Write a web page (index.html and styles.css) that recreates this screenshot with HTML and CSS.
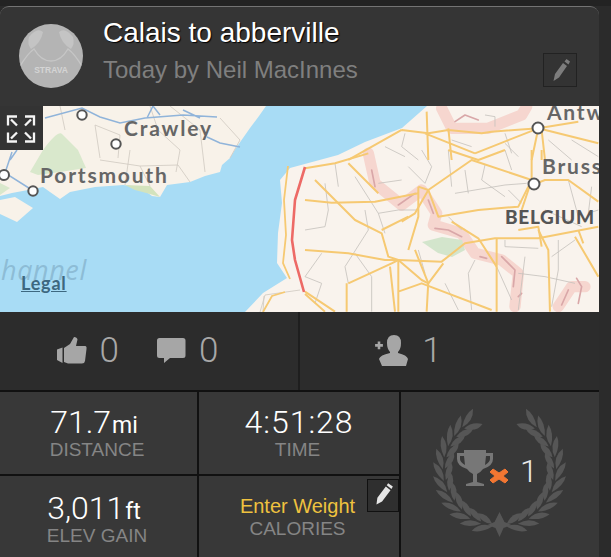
FILE: index.html
```html
<!DOCTYPE html>
<html lang="en">
<head>
<meta charset="utf-8">
<title>Calais to abberville</title>
<link rel="stylesheet" href="styles.css">
</head>
<body>
<main class="card">
  <header class="head">
    <svg class="avatar" viewBox="0 0 64 64" aria-hidden="true">
      <defs><clipPath id="av"><circle cx="32" cy="32" r="32"/></clipPath></defs>
      <circle cx="32" cy="32" r="32" fill="#b4b4b4"/>
      <g clip-path="url(#av)">
        <path d="M0 44 Q8 30 15 25 Q22 37 32 37 Q42 37 49 25 Q56 30 64 44" fill="none" stroke="#c6c6c6" stroke-width="1.4"/>
        <path d="M10 13 Q18 3 24 8 Q22 19 12 25 Q8 20 10 13Z" fill="#c4c4c4"/>
        <path d="M54 13 Q46 3 40 8 Q42 19 52 25 Q56 20 54 13Z" fill="#c4c4c4"/>
      </g>
      <text x="32" y="49" class="avatar-text" text-anchor="middle">STRAVA</text>
    </svg>
    <div class="titles">
      <h1 class="title">Calais to abberville</h1>
      <p class="sub">Today by Neil MacInnes</p>
    </div>
    <button class="edit" aria-label="Edit">
      <svg viewBox="0 0 32 32" width="32" height="32"><path d="M9.500 27 L11 20 L19 9 L23 12 L15 23.500Z M20.500 7.500 L22.500 5 L26 7.500 L24.500 10.500Z" fill="#7d7d7d"/></svg>
    </button>
  </header>

  <section class="map">
    <svg class="map-art" viewBox="0 106 599 206" width="599" height="206" aria-hidden="true">
      <rect x="0" y="106" width="599" height="206" fill="#a8dcf5"/>
      <!-- England -->
      <path d="M0 106 H266 L259 116 L250 128 L236 148 L230 158 L222 165 L220 172 L205 176 L190 182 L167 185 L160 197 L152 196 L140 187 L123 185 L95 187 L70 192 L60 199 L50 192 L43 187 L28 190 L12 193 L0 196Z" fill="#f8f2e9"/>
      <path d="M0 200 L15 197 L33 208 L17 222 L0 214Z" fill="#f8f2e9"/>
      <path d="M43 150 Q58 130 62 134 L78 150 L86 168 L60 172 L38 175 L30 172Z" fill="#d9e8cc"/>
      <path d="M125 185 L150 186 L160 197 L150 194 L135 190Z" fill="#d3e3bd"/>
      <path d="M0 183 L10 188 L0 195Z" fill="#d9e8cc"/>
      <!-- France / Belgium -->
      <path d="M427 106 H599 V312 H245 L263 293 L287 278 L277 263 L278 233 L282 203 L280 180 L290 168 L338 155 L365 142 L402 128Z" fill="#f9f3ed"/>
      <!-- thin borders -->
      <g fill="none" stroke="#cfc9c0" stroke-width=".8">
        <path d="M100 158 L95 125 L120 135 L118 158 M150 106 L158 130 L180 150 L176 172 M220 118 L240 140 L230 158 M100 160 L140 166 L178 165 L190 182 M140 166 L150 186 M260 312 L265 295 L300 290 M264 296 L263 312 M60 106 L65 130 M170 106 L200 130 L205 172 M130 150 L125 185"/>
      </g>
      <!-- pink hills -->
      <g transform="translate(305 150) scale(.3333)" fill="none" stroke-linejoin="round" stroke-linecap="round">
        <path d="M190 10 L210 100 L290 165 L350 120 L395 190 L385 225 L470 250 L510 310 L590 330 L640 370 L630 470 M760 470 L800 410 L840 410" stroke="#f6d6cf" stroke-width="34"/>
        <path d="M200 60 L210 110 M280 165 L330 130 M370 150 L385 190 M390 235 L430 240 L470 260 M525 320 L545 325 M590 320 L630 360 L625 410 M640 440 L650 430 M770 465 L790 420 M815 385 L830 410 L820 460" stroke="#d9a7a8" stroke-width="5"/>
      </g>
      <g transform="translate(305 0) scale(.3333)" fill="none" stroke-linejoin="round" stroke-linecap="round">
        <path d="M410 325 L440 385 L550 385 L650 345 L665 320" stroke="#f6d6cf" stroke-width="34"/>
        <path d="M450 365 L480 345 L520 360" stroke="#d9a7a8" stroke-width="5"/>
      </g>
      <path d="M422 242 L442 237 L462 240 L465 250 L452 257 L438 253Z" fill="#d3e5cc"/>
      <!-- thin lines France -->
      <g transform="translate(305 150) scale(.3333)" fill="none" stroke="#c4c0bb" stroke-width="2.400">
        <path d="M0 240 L60 230 L70 180 L60 100 M90 40 L100 110 M180 180 L190 240 L120 350 L130 400 M0 380 L50 310 M220 100 L290 90 M310 50 L360 100 L380 50 L350 0 M450 130 L600 105 L665 100 M480 60 L490 130 M540 45 L530 90 L600 140 M610 120 L650 160 M510 330 L490 370 L500 480 M620 450 L575 350 M640 370 L720 380 L810 400 M740 320 L810 270 M860 110 L850 190 L880 180 M790 90 L820 200 M220 190 L280 180 L340 180 M600 270 L600 290 L700 295 M720 180 L830 230 M430 200 L470 240 M30 460 L50 400 L0 380 M150 80 L220 190 L240 250 M340 300 L360 370 M660 320 L640 480 M420 400 L460 480 M150 310 L200 380 L200 485 M440 110 L430 0 M600 0 L620 60 M760 270 L760 360 L740 470"/>
      </g>
      <g transform="translate(305 0) scale(.3333)" fill="none" stroke="#c4c0bb" stroke-width="2.400">
        <path d="M300 400 L290 440 L340 480 M540 345 L570 350 L570 380 M600 430 L640 470 M730 420 L800 480 M800 420 L880 470 M240 440 L300 470 M440 420 L500 440 M600 400 L620 460"/>
      </g>
      <!-- orange roads -->
      <g transform="translate(305 150) scale(.3333)" fill="none" stroke="#f6c972" stroke-width="6" stroke-linejoin="round">
        <path d="M0 150 L80 158 L210 155 L340 130"/>
        <path d="M30 90 L90 150 L150 210 L230 250 L250 320 L280 330"/>
        <path d="M130 40 L220 130 M0 55 L90 40 L190 10"/>
        <path d="M340 110 L370 120 L400 200 L520 180 L640 170 L670 110 L720 90 L790 90 L880 155"/>
        <path d="M290 215 L330 190 L370 120 L500 30 L680 90"/>
        <path d="M0 300 L130 310 L240 330 L280 330 L410 335 L480 280 L570 265 L700 265 L880 230"/>
        <path d="M130 400 L260 340 L280 330 L350 390 L370 400 L415 340"/>
        <path d="M280 330 L280 485 M255 350 L270 485 M280 425 L350 400 L560 480 M125 485 L125 400"/>
        <path d="M575 265 L575 485 M700 240 L730 300 L735 485 M370 395 L365 485 M330 300 L370 400"/>
        <path d="M0 425 L90 485 M0 432 L60 485 M810 260 L880 380 M440 215 L520 265 L575 350"/>
        <path d="M680 0 L680 90 L650 180 M710 0 L710 30 M430 0 L520 30 L600 0 M340 110 L340 200 L310 300 M640 240 L700 230 L710 290 M230 240 L310 200 M820 240 L835 280"/>
      </g>
      <g transform="translate(305 0) scale(.3333)" fill="none" stroke="#f6c972" stroke-width="6" stroke-linejoin="round">
        <path d="M365 335 L370 480 M290 390 L370 400 L430 390 L530 400 L560 395 L700 385 L880 430 M430 385 L440 480 M360 400 L510 460 M700 385 L680 480 M700 385 L820 365 M510 460 L700 385 M130 480 L290 390 M710 390 L720 480"/>
      </g>
      <!-- coast road France -->
      <path d="M288 166 L284 200 L286 235 L283 263 L290 279 M263 312 L272 296 L285 292" fill="none" stroke="#f6c972" stroke-width="1.800"/>
      <!-- route -->
      <path d="M305 167 L295 200 L292 240 L295 260 L304 292" fill="none" stroke="#ed6a66" stroke-width="2.600" stroke-linejoin="round"/>
      <!-- England roads -->
      <g fill="none" stroke="#90b4da" stroke-width="1.500">
        <path d="M45 118 L82 108 L100 117 L120 123 L145 118 L183 115 L217 117 M147 118 L153 106 L160 115 M183 110 L200 118"/>
        <path d="M207 137 L220 143 L240 147 M10 160 L17 150 M12 152 L5 173 L32 190"/>
      </g>
      <g fill="#fff" stroke="#555" stroke-width="2">
        <circle cx="82" cy="115" r="4.700"/><circle cx="116" cy="144" r="4.700"/>
        <circle cx="4" cy="175" r="5"/><circle cx="33" cy="191" r="4.700"/>
        <circle cx="538" cy="128" r="5.500"/><circle cx="534" cy="184" r="5.500"/>
      </g>
      <text x="124" y="136" class="place">Crawley</text>
      <text x="40" y="183" class="place">Portsmouth</text>
      <text x="547" y="120" class="place">Antw</text>
      <text x="542" y="174" class="place">Brussels</text>
      <text x="505" y="224" class="country">BELGIUM</text>
      <text x="1" y="280" class="sea">hannel</text>
    </svg>
    <button class="expand" aria-label="Expand">
      <svg viewBox="0 0 43 44" width="43" height="44"><path d="M9 27v9h9M12 33l6-6M35 27v9h-9M32 33l-6-6M9 20v-9h9M12 14l6 6M35 20v-9h-9M32 14l-6 6" transform="translate(-1 -.5)" fill="none" stroke="#f4f4f4" stroke-width="2.300"/></svg>
    </button>
    <a class="legal" href="#">Legal</a>
  </section>

  <section class="social">
    <div class="social-cell social-left">
      <span class="count-group">
        <svg class="ic" width="30" height="28" viewBox="0 0 30 28"><path d="M0 12.500 L5.500 10.500 V26 L0 23Z M7 11 L13 7 L17 0 Q20 0 20.500 2.500 L19 9 H28.500 Q30 9.500 29.500 12 L28 24 Q27.500 27 24 26.500 H11 L7 25Z" fill="#a6a6a6"/></svg>
        <span class="count">0</span>
      </span>
      <span class="count-group">
        <svg class="ic" width="29" height="26" viewBox="0 0 29 26"><path d="M2.500 0 H26 Q28.500 0 28.500 2.500 V17.500 Q28.500 20 26 20 H13 L7 25 L7 20 H2.500 Q0 20 0 17.500 V2.500 Q0 0 2.500 0Z" fill="#a6a6a6"/></svg>
        <span class="count">0</span>
      </span>
    </div>
    <div class="social-cell social-right">
      <span class="count-group">
        <svg class="ic" width="34" height="32" viewBox="0 0 34 32"><path d="M2.700 6.500 h2.600 v2.600 h2.600 v2.600 h-2.600 v2.600 h-2.600 v-2.600 h-2.600 v-2.600 h2.600Z M19 0 Q26 0 26 8 Q26 14 23 17 V18 Q32 20 33 24 L31 31 H7 L4 24 Q5 20 15 18 V17 Q12 14 12 8 Q12 0 19 0Z" fill="#a6a6a6"/></svg>
        <span class="count">1</span>
      </span>
    </div>
  </section>

  <section class="stats">
    <div class="stat">
      <div class="value has-unit">71.7<small class="unit">mi</small></div>
      <div class="label">DISTANCE</div>
    </div>
    <div class="stat">
      <div class="value value-time">4:51:28</div>
      <div class="label">TIME</div>
    </div>
    <div class="stat trophy-cell">
      <svg width="198" height="165" viewBox="401 392 198 165" aria-hidden="true">
        <defs>
          <g id="leaf-pair" fill="#565656">
            <path d="M-9 -56 Q0 -66 10 -66 Q4 -55 -9 -56Z"/>
            <path d="M-8 -54 Q2 -56 10 -48 Q0 -44 -8 -54Z"/>
          </g>
          <g id="branch">
            <use href="#leaf-pair" transform="rotate(-164)"/>
            <use href="#leaf-pair" transform="rotate(-152)"/>
            <use href="#leaf-pair" transform="rotate(-140)"/>
            <use href="#leaf-pair" transform="rotate(-128)"/>
            <use href="#leaf-pair" transform="rotate(-116)"/>
            <use href="#leaf-pair" transform="rotate(-104)"/>
            <use href="#leaf-pair" transform="rotate(-92)"/>
            <use href="#leaf-pair" transform="rotate(-80)"/>
            <use href="#leaf-pair" transform="rotate(-68)"/>
            <use href="#leaf-pair" transform="rotate(-56)"/>
            <use href="#leaf-pair" transform="rotate(-44)"/>
            <use href="#leaf-pair" transform="rotate(-32)"/>
          </g>
        </defs>
        <g transform="translate(499.500 470)">
          <use href="#branch"/>
          <use href="#branch" transform="scale(-1 1)"/>
          <path d="M0 42 L5 52 L12 55 L4 58 L0 67 L-4 58 L-12 55 L-5 52Z" fill="#565656"/>
        </g>
        <path d="M464 450 H486 V453 H493 V459 Q493 466 483 469 Q480 473 477 474 V482 L484 484 V486 H466 V484 L473 482 V474 Q470 473 467 469 Q457 466 457 459 V453 H464Z M460 456 V459 Q460 462 465 465 L464 456Z M490 456 H486 L485 465 Q490 462 490 459Z" fill="#777" fill-rule="evenodd"/>
        <path d="M493 469 L499 473 L505 469 L508 472 L503 476 L508 480 L505 483 L499 479 L493 483 L490 480 L495 476 L490 472Z" fill="#f27632" stroke="#f27632" stroke-width="1"/>
        <text x="520" y="482" class="trophy-num">1</text>
      </svg>
    </div>
    <div class="stat stat-low">
      <div class="value has-unit">3,011<small class="unit">ft</small></div>
      <div class="label">ELEV GAIN</div>
    </div>
    <div class="stat stat-cal">
      <div class="enter">Enter Weight</div>
      <div class="label">CALORIES</div>
      <button class="edit-cal" aria-label="Edit weight">
        <svg viewBox="0 0 32 32" width="30" height="30"><path d="M9 26 L10 19 L19 7 L24 11 L15 23Z M20 5.500 L21.500 3.500 L26.500 7 L25 9.500Z" fill="#e6e6e6"/></svg>
      </button>
    </div>
  </section>
</main>
</body>
</html>
```
FILE: styles.css
```css
* { box-sizing: border-box; }
html, body { margin: 0; padding: 0; }
body {
  width: 611px;
  height: 557px;
  overflow: hidden;
  background: #2b2b2b;
  border-top: 6px solid #232323;
  font-family: "Liberation Sans", Arial, sans-serif;
}
.card { width: 599px; }
.head {
  display: flex;
  align-items: flex-start;
  height: 100px;
  background: #353535;
  border-top: 1px solid #747474;
  border-radius: 9px 9px 0 0;
  padding: 17px 22px 0 19px;
}
.avatar { width: 64px; height: 64px; flex: none; }
.avatar-text { font: 700 8.500px "Liberation Sans", sans-serif; fill: #d4d4d4; }
.titles { flex: 1; margin-left: 20px; margin-top: -6px; }
.title {
  margin: 0;
  font-size: 28px;
  font-weight: 400;
  line-height: 30px;
  color: #fff;
  text-shadow: 1px 1px 1px #000;
}
.sub { margin: 9px 0 0; font-size: 24px; line-height: 26px; color: #7f7f7f; }
.edit {
  flex: none;
  width: 34px;
  height: 34px;
  margin-top: 29px;
  padding: 0;
  background: #333;
  border: 1px solid #222;
}
.map { position: relative; height: 206px; overflow: hidden; }
.map-art { display: block; }
.place { font: 700 21px Lato, sans-serif; fill: #666; letter-spacing: 1.800px; }
.country { font: 900 19px Lato, sans-serif; fill: #555; letter-spacing: .7px; }
.sea { font: italic 400 27px "Open Sans", sans-serif; fill: #8dbcd6; letter-spacing: .6px; }
.expand {
  position: absolute;
  left: 0;
  top: 0;
  width: 43px;
  height: 44px;
  padding: 0;
  border: 0;
  background: #333;
}
.legal {
  position: absolute;
  left: 21px;
  top: 166px;
  font: 700 18px Lato, sans-serif;
  letter-spacing: .8px;
  color: #3d6880;
}
.social {
  display: flex;
  height: 78px;
  background: #2c2c2c;
}
.social-cell {
  display: flex;
  align-items: center;
  justify-content: center;
}
.social-left { width: 300px; gap: 38px; border-right: 2px solid #1e1e1e; padding-right: 23px; }
.social-right { flex: 1; padding-right: 82px; }
.count-group { display: flex; align-items: center; gap: 13px; }
.ic { display: block; }
.count {
  font-family: Roboto, sans-serif;
  font-weight: 300;
  font-size: 35px;
  line-height: 40px;
  color: #a8a8a8;
}
.stats {
  display: grid;
  grid-template-columns: 197px 200px 198px;
  grid-template-rows: 82px 81px;
  gap: 2px;
  padding-top: 2px;
  background: #111;
}
.stat {
  position: relative;
  display: flex;
  flex-direction: column;
  align-items: center;
  justify-content: flex-start;
  background: #383838;
  padding: 15px 3px 0 0;
}
.trophy-cell { grid-column: 3; grid-row: 1 / 3; padding: 0; }
.stat:nth-child(4) { grid-column: 1; grid-row: 2; }
.stat:nth-child(5) { grid-column: 2; grid-row: 2; }
.value {
  font-family: Roboto, sans-serif;
  font-weight: 300;
  font-size: 32px;
  line-height: 30px;
  color: #fff;
}
.has-unit { margin-right: 6px; }
.value-time { letter-spacing: 1px; margin-left: 3px; }
.unit { font-size: 23px; font-weight: 400; margin-left: 1px; line-height: 0; }
.label { margin-top: 2px; font-size: 19px; line-height: 22px; color: #858585; }
.stat-low { padding-top: 17px; }
.stat-cal { padding-top: 18px; }
.enter { font-size: 20px; line-height: 24px; color: #efc23f; margin-bottom: -2px; }
.edit-cal {
  position: absolute;
  right: 0;
  top: 3px;
  width: 32px;
  height: 33px;
  padding: 0;
  background: #2f2f2f;
  border: 1px solid #111;
}
.trophy-num { font: 300 32px Roboto, sans-serif; fill: #e8e8e8; }
```
